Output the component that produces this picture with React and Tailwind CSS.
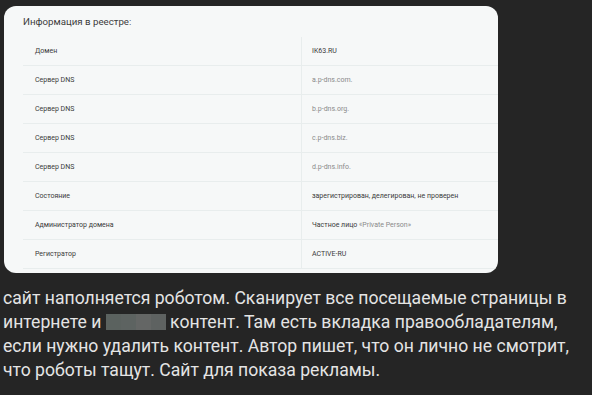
import React from "react";

const rows = [
  { label: "Домен", value: "IK63.RU", tone: "dark" },
  { label: "Сервер DNS", value: "a.p-dns.com.", tone: "light" },
  { label: "Сервер DNS", value: "b.p-dns.org.", tone: "light" },
  { label: "Сервер DNS", value: "c.p-dns.biz.", tone: "light" },
  { label: "Сервер DNS", value: "d.p-dns.info.", tone: "light" },
  { label: "Состояние", value: "зарегистрирован, делегирован, не проверен", tone: "dark" },
  { label: "Администратор домена", value: null, tone: "dark" },
  { label: "Регистратор", value: "ACTIVE-RU", tone: "dark" },
];

export default function App() {
  return (
    <div className="w-[592px] h-[395px] bg-[#252525] overflow-hidden pt-[6px]" style={{ fontFamily: "Roboto, 'Noto Sans', sans-serif" }}>
      <div className="ml-[4px] w-[494px] h-[267px] bg-[#f6f8f8] rounded-[12px] overflow-hidden pl-[19px] pt-[8px] pb-[4px]">
        <div className="text-[9.7px] leading-[14px] text-[#3c3c3c] h-[23px] pt-[1px]">Информация в реестре:</div>
        <div className="flex flex-col">
          {rows.map((r, i) => (
            <div key={i} className="flex h-[29px] border-b border-[#e8eded]">
              <div className="w-[279px] pl-[12px] flex items-center text-[7px] text-[#3a3a3a] border-r border-[#e8eded]">{r.label}</div>
              <div className="flex-1 pl-[10px] flex items-center text-[7px]">
                {r.value === null ? (
                  <span className="text-[#3a3a3a]">Частное лицо <span className="text-[#8a8a8a]">«Private Person»</span></span>
                ) : (
                  <span className={r.tone === "light" ? "text-[#8a8a8a]" : "text-[#3a3a3a]"}>{r.value}</span>
                )}
              </div>
            </div>
          ))}
        </div>
      </div>
      <div className="mt-[13px] pl-[3px] w-[580px] text-[17.6px] leading-[24px] text-[#e4e4e4]">
        сайт наполняется роботом. Сканирует все посещаемые страницы в интернете и{" "}
        <span className="inline-flex align-middle h-[16px] w-[60px] -mt-[2px]">
          <span className="w-[15px] h-full bg-[#5b625f]" />
          <span className="w-[15px] h-full bg-[#5d6361]" />
          <span className="w-[15px] h-full bg-[#646665]" />
          <span className="w-[15px] h-full bg-[#5e6261]" />
        </span>{" "}
        контент. Там есть вкладка правообладателям, если нужно удалить контент. Автор пишет, что он лично не смотрит, что роботы тащут. Сайт для показа рекламы.
      </div>
    </div>
  );
}
